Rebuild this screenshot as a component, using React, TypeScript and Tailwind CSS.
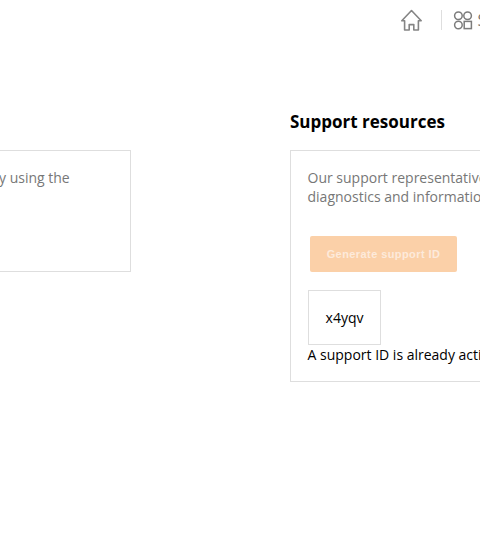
function HomeIcon() {
  return (
    <svg width="22" height="22" viewBox="0 0 22 22" fill="none" stroke="#858585" strokeWidth="1.6" strokeLinejoin="round" strokeLinecap="round">
      <path d="M11.5 1.5 1.8 11.8H4.6V21H9.2V15.6H13.8V21H18.4V11.8H21.2Z" />
    </svg>
  );
}

function AppsIcon() {
  return (
    <svg width="20" height="20" viewBox="0 0 20 20" fill="none" stroke="#7c7c7c" strokeWidth="1.5">
      <circle cx="5.4" cy="5.8" r="3.8" />
      <circle cx="14.6" cy="5.8" r="3.8" />
      <circle cx="5.4" cy="15" r="3.8" />
      <rect x="11.2" y="11.4" width="7.2" height="7.2" />
    </svg>
  );
}

export default function App() {
  return (
    <div className="flex h-[552px] w-[480px] flex-col overflow-hidden bg-white font-['Open_Sans',sans-serif] text-sm leading-[19px] text-black">
      <header className="flex h-10 shrink-0 items-center pl-[400px]">
        <div className="flex shrink-0 items-center">
          <HomeIcon />
        </div>
        <div className="ml-[19px] h-5 w-px shrink-0 bg-[#dedede]" />
        <div className="ml-[11px] flex shrink-0 items-center">
          <AppsIcon />
          <span className="ml-[4.5px] text-base leading-5 text-[#777]">Support</span>
        </div>
      </header>
      <main className="flex items-start">
        <section className="mt-[110px] h-[122px] w-[131px] shrink-0 border border-l-0 border-[#dedede] pt-[17px]">
          <p className="-ml-px whitespace-nowrap text-[#777]">y using the</p>
        </section>
        <section className="ml-[159px] w-[400px] shrink-0 pt-[70px]">
          <h2 className="h-10 text-[17px] font-bold leading-6">Support resources</h2>
          <div className="h-[232px] border border-[#dedede] pl-[17px] pt-[17px]">
            <p className="-ml-[0.5px] whitespace-nowrap text-[#777]">
              Our support representatives can use
              <br />
              diagnostics and information to help
            </p>
            <button className="ml-[2px] mt-[30px] flex h-9 w-[147px] items-center justify-center rounded-[2px] bg-[#fbd0a8] font-['Liberation_Sans',Arial,sans-serif] text-[11px] font-bold tracking-[0.42px] text-[#fdeadb]">
              Generate support ID
            </button>
            <div className="mt-[18px] flex h-[55px] w-[73px] items-center justify-center border border-[#dedede]">
              x4yqv
            </div>
            <p className="-ml-[0.5px] whitespace-nowrap">A support ID is already active</p>
          </div>
        </section>
      </main>
    </div>
  );
}
